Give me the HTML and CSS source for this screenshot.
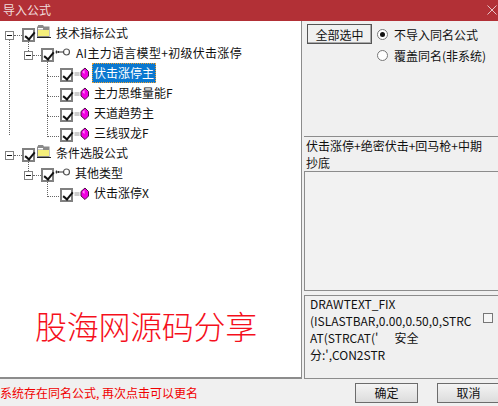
FILE: index.html
```html
<!DOCTYPE html>
<html lang="zh-CN">
<head>
    <meta charset="UTF-8">
    <title>导入公式</title>
    <link rel="stylesheet" href="styles.css">
</head>
<body>
    <svg class="defs" width="0" height="0">
        <symbol id="folder" viewBox="0 0 15 20">
            <path d="M1 4V1.500h1V0h5l1 1.500h5.500V12H1z" fill="#8a8a8a"/>
            <path d="M2 5h11v6H2z" fill="#f4ee7a"/>
            <path d="M1 12h14v1H1z" fill="#222"/>
            <path d="M2 3h5v1.500H2z" fill="#fff"/>
        </symbol>
        <symbol id="key" viewBox="0 0 15 20">
            <circle cx="11.500" cy="7" r="3" fill="#fff" stroke="#555" stroke-width="1.200"/>
            <path d="M0.500 7H8.500M1.500 5.500v3M3.500 6v2" fill="none" stroke="#333" stroke-width="1.200"/>
        </symbol>
        <symbol id="gem" viewBox="0 0 15 20">
            <path d="M0.500 8h5M0.500 10h5" stroke="#999" stroke-width="1"/>
            <path d="M11 3l3.500 3.500v4.500l-3.500 3.500-4-3.500V6.500z" fill="#f000e0" stroke="#50104a" stroke-width="1"/>
            <path d="M8.500 7l2-2v4z" fill="#ff9cf5"/>
        </symbol>
    </svg>

    <div class="dialog">
        <header class="title-bar">
            <span>导入公式</span>
            <svg class="close" width="10" height="10" viewBox="0 0 10 10"><path d="M0.500 0.500l9 9M9.500 0.500l-9 9" stroke="#e6c4c6" stroke-width="1"/></svg>
        </header>

        <section class="tree-panel">
            <ul class="tree">
                <li class="node level-0"><span class="expander"></span><span class="check"></span><svg class="icon"><use href="#folder"/></svg><span class="label">技术指标公式</span></li>
                <li class="node level-1"><span class="expander"></span><span class="check"></span><svg class="icon"><use href="#key"/></svg><span class="label wide">AI主力语言模型+初级伏击涨停</span></li>
                <li class="node level-2"><span class="check"></span><svg class="icon"><use href="#gem"/></svg><span class="label selected">伏击涨停主</span></li>
                <li class="node level-2"><span class="check"></span><svg class="icon"><use href="#gem"/></svg><span class="label">主力思维量能F</span></li>
                <li class="node level-2"><span class="check"></span><svg class="icon"><use href="#gem"/></svg><span class="label">天道趋势主</span></li>
                <li class="node level-2"><span class="check"></span><svg class="icon"><use href="#gem"/></svg><span class="label">三线驭龙F</span></li>
                <li class="node level-0"><span class="expander"></span><span class="check"></span><svg class="icon"><use href="#folder"/></svg><span class="label">条件选股公式</span></li>
                <li class="node level-1"><span class="expander"></span><span class="check"></span><svg class="icon"><use href="#key"/></svg><span class="label">其他类型</span></li>
                <li class="node level-2"><span class="check"></span><svg class="icon"><use href="#gem"/></svg><span class="label">伏击涨停X</span></li>
            </ul>
            <div class="watermark">股海网源码分享</div>
        </section>

        <aside class="side">
            <div class="side-top">
                <button class="btn select-all">全部选中</button>
                <div class="radios">
                    <div class="radio-row"><span class="radio on"></span>不导入同名公式</div>
                    <div class="radio-row"><span class="radio"></span>覆盖同名(非系统)</div>
                </div>
            </div>
            <div class="desc-box">
                <p class="desc">伏击涨停+绝密伏击+回马枪+中期<br>抄底</p>
                <div class="desc-inner"></div>
            </div>
            <div class="code-box">
                <p class="code">DRAWTEXT_FIX<br>(ISLASTBAR,0.00,0.50,0,STRC<br>AT(STRCAT('&nbsp;&nbsp;&nbsp;&nbsp;&nbsp;&nbsp;安全<br>分:',CON2STR</p>
                <span class="small-check"></span>
            </div>
        </aside>

        <footer class="status-bar">
            <span class="status">系统存在同名公式, 再次点击可以更名</span>
            <button class="btn ok">确定</button>
            <button class="btn cancel">取消</button>
        </footer>
    </div>
</body>
</html>
```

FILE: styles.css
```css
* {
    box-sizing: border-box;
}

html, body {
    margin: 0;
    padding: 0;
    overflow: hidden;
}

body {
    width: 498px;
    height: 406px;
    font-family: "Noto Sans CJK SC", "Liberation Sans", sans-serif;
    font-size: 12px;
    color: #111;
    background-color: #f0f0f0;
}

.defs {
    position: absolute;
}

.dialog {
    display: grid;
    grid-template-columns: 302px 196px;
    grid-template-rows: 21px 358px 27px;
    height: 406px;
}

.title-bar {
    grid-column: 1 / 3;
    display: flex;
    justify-content: space-between;
    align-items: center;
    padding: 0 1px 2px 3px;
    background-color: #b23036;
    color: #f0dcdc;
    line-height: 16px;
}

/* Left side: formula tree */
.tree-panel {
    display: flex;
    flex-direction: column;
    padding-top: 4px;
    background-color: #ffffff;
    border-right: 1px solid #8c8c8c;
    border-bottom: 2px solid #8c8c8c;
}

.tree {
    list-style: none;
    margin: 0;
    padding: 0;
}

.node {
    position: relative;
    display: flex;
    align-items: center;
    height: 20px;
    white-space: nowrap;
}

.level-0 {
    padding-left: 5px;
}

.level-1 {
    padding-left: 24px;
}

.level-2 {
    padding-left: 60px;
}

/* dotted connectors */
.level-0::before {
    content: "";
    position: absolute;
    left: 9px;
    top: 10px;
    height: 100px;
    border-left: 1px dotted #666;
}

.level-0:nth-child(7)::before {
    display: none;
}

.level-1::before {
    content: "";
    position: absolute;
    left: 28px;
    top: -10px;
    height: 16px;
    border-left: 1px dotted #666;
}

.level-2::before {
    content: "";
    position: absolute;
    left: 47px;
    top: -10px;
    width: 13px;
    height: 21px;
    border-left: 1px dotted #666;
    border-bottom: 1px dotted #666;
}

.expander {
    position: relative;
    z-index: 1;
    width: 9px;
    height: 9px;
    margin-right: 8px;
    background-color: #fff;
    border: 1px solid #808080;
}

.expander::before {
    content: "";
    position: absolute;
    left: 1px;
    top: 3px;
    width: 5px;
    height: 1px;
    background-color: #111;
}

.expander::after {
    content: "";
    position: absolute;
    left: 8px;
    top: 3px;
    width: 8px;
    border-top: 1px dotted #666;
}

.check {
    position: relative;
    z-index: 1;
    width: 13px;
    height: 14px;
    margin-right: 1px;
    background-color: #fff;
    border: 2px solid #808080;
    flex-shrink: 0;
}

.check::after {
    content: "";
    position: absolute;
    left: 3px;
    top: 0;
    width: 4px;
    height: 8px;
    border-right: 2px solid #111;
    border-bottom: 2px solid #111;
    transform: rotate(40deg);
}

.icon {
    width: 15px;
    height: 20px;
    flex-shrink: 0;
}

.label {
    margin: 0 0 4px 3px;
    padding: 0 2px;
    line-height: 20px;
}

.label.wide {
    margin-left: 4px;
    letter-spacing: 0.3px;
}

.label.selected {
    background-color: #0a78d0;
    color: #fff;
    outline: 1px dotted #f0a030;
    outline-offset: -1px;
}

.watermark {
    margin-top: 100px;
    padding-left: 35px;
    font-size: 32px;
    font-weight: 300;
    letter-spacing: -0.3px;
    line-height: 40px;
    color: #f5101c;
    white-space: nowrap;
}

/* Right side */
.side {
    display: flex;
    flex-direction: column;
    padding-left: 2px;
    min-width: 0;
}

.side-top {
    display: flex;
    gap: 5px;
    height: 116px;
    padding: 3px 0 0 3px;
}

.btn {
    height: 20px;
    padding: 0;
    font-family: inherit;
    font-size: 12px;
    color: #111;
    background: linear-gradient(to bottom, #f4f4f4, #dcdcdc);
    border: 1px solid #6c6c6c;
}

.select-all {
    width: 65px;
    background: #f0f0f0;
    border: 1px solid #555;
    box-shadow: inset -1px -1px 0 #aaa;
}

.radios {
    display: flex;
    flex-direction: column;
}

.radio-row {
    display: flex;
    align-items: center;
    gap: 6px;
    height: 21px;
    white-space: nowrap;
}

.radio {
    position: relative;
    width: 11px;
    height: 11px;
    background-color: #fff;
    border: 1px solid #777;
    border-radius: 50%;
}

.radio.on::after {
    content: "";
    position: absolute;
    left: 2px;
    top: 2px;
    width: 5px;
    height: 5px;
    border-radius: 50%;
    background-color: #111;
}

.desc-box {
    display: flex;
    flex-direction: column;
    height: 157px;
    border-top: 1px solid #8c8c8c;
}

.desc {
    margin: 0;
    padding-left: 2px;
    line-height: 17px;
    height: 34px;
}

.desc-inner {
    flex: 1;
    background-color: #f2f2f2;
    border: 1px solid #8c8c8c;
    border-right: none;
}

.code-box {
    display: flex;
    height: 85px;
    margin-top: 4px;
    background-color: #f0f0f0;
    border: 1px solid #8c8c8c;
    border-right: none;
}

.code {
    flex: 1;
    margin: -1px 0 0;
    padding-left: 5px;
    line-height: 17px;
    white-space: nowrap;
    overflow: hidden;
}

.small-check {
    width: 10px;
    height: 10px;
    margin: 17px 5px 0 0;
    background-color: #f6f6f6;
    border: 1px solid #777;
}

.status-bar {
    grid-column: 1 / 3;
    display: flex;
    align-items: center;
}

.status {
    flex: 1;
    color: #f00000;
    white-space: nowrap;
}

.ok {
    width: 63px;
}

.cancel {
    width: 63px;
    margin: 0 -2px 0 19px;
}
```
